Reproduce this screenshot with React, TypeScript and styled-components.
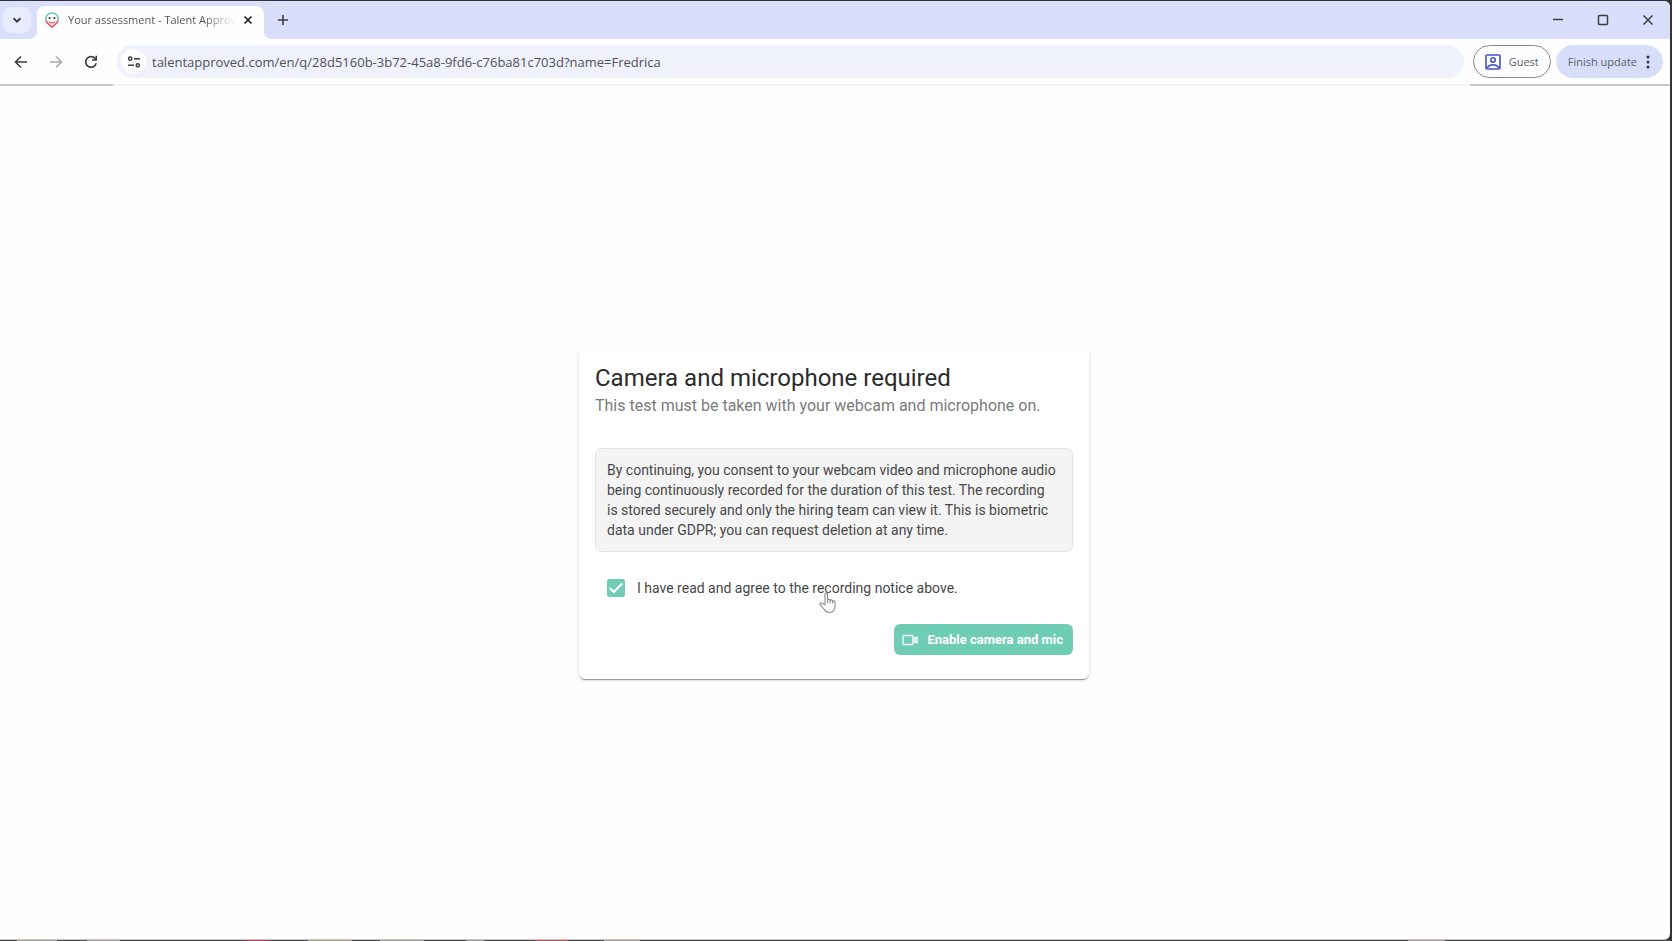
import React, { useState } from "react";
import styled, { createGlobalStyle } from "styled-components";

const GlobalStyle = createGlobalStyle`
  *, *::before, *::after { box-sizing: border-box; }
  body { margin: 0; background: #333437; font-family: Roboto, sans-serif; }
  button, input { font: inherit; }
`;

const uiFont = `"Open Sans", "Noto Sans", sans-serif`;

const Frame = styled.div`
  display: flex;
  flex-direction: column;
  min-height: 100vh;
  padding: 1px 2px 0 0;
`;

const BrowserWindow = styled.div`
  flex: 1;
  display: flex;
  flex-direction: column;
  overflow: hidden;
  border-radius: 0 6px 6px 0;
  border-bottom: 1px solid #c4c4c4;
  background: #fefefe;
`;

const DesktopEdge = styled.div`
  height: 1px;
  background: linear-gradient(
    to right,
    #4d4d4f 17px, #a9a5a3 17px 57px,
    #4d4d4f 57px 87px, #a09d9c 87px 120px,
    #4d4d4f 120px 245px, #a33a55 245px 270px,
    #4d4d4f 270px 308px, #a8a07c 308px 352px,
    #4d4d4f 352px 380px, #a3a19d 380px 424px,
    #4d4d4f 424px 466px, #9b9b9b 466px 484px,
    #4d4d4f 484px 535px, #b0564f 535px 568px,
    #4d4d4f 568px 604px, #a89f9f 604px 640px,
    #4d4d4f 640px 1408px, #aaa2a3 1408px 1445px,
    #4d4d4f 1445px
  );
`;

const TabStrip = styled.header`
  display: flex;
  align-items: center;
  height: 38px;
  padding-left: 3px;
  background: #d9defb;
`;

const IconButton = styled.button<{ $w?: number; $h?: number; $color?: string; $bg?: string }>`
  display: flex;
  align-items: center;
  justify-content: center;
  flex: none;
  width: ${(p) => p.$w ?? 28}px;
  height: ${(p) => p.$h ?? 28}px;
  padding: 0;
  border: 0;
  border-radius: 8px;
  color: ${(p) => p.$color ?? "#3b3d42"};
  background: ${(p) => p.$bg ?? "transparent"};
`;

const Tab = styled.div`
  position: relative;
  display: flex;
  align-items: center;
  align-self: flex-end;
  width: 227px;
  height: 33px;
  margin-left: 6px;
  padding: 0 4px 5px 8px;
  border-radius: 8px 8px 0 0;
  background: #fefefe;

  &::before,
  &::after {
    content: "";
    position: absolute;
    bottom: 0;
    width: 8px;
    height: 8px;
  }
  &::before {
    right: 100%;
    background: radial-gradient(circle at 0 0, transparent 8px, #fefefe 8px);
  }
  &::after {
    left: 100%;
    background: radial-gradient(circle at 100% 0, transparent 8px, #fefefe 8px);
  }
`;

const TabTitle = styled.span`
  flex: 1;
  margin-left: 9px;
  overflow: hidden;
  white-space: nowrap;
  font: 11px/16px ${uiFont};
  color: #55575c;
  mask-image: linear-gradient(to right, #000 calc(100% - 32px), transparent);
`;

const WindowControls = styled.div`
  display: flex;
  gap: 17px;
  margin-left: auto;
  padding-right: 8px;
`;

const Toolbar = styled.nav`
  display: flex;
  align-items: center;
  height: 45px;
  padding: 0 7px;
`;

const NavButtons = styled.div`
  display: flex;
  gap: 7px;
  margin-right: 12px;
`;

const AddressBar = styled.label`
  flex: 1;
  display: flex;
  align-items: center;
  height: 33px;
  padding-left: 4px;
  border-radius: 17px;
  background: #eff1fc;
`;

const SiteInfo = styled.span`
  display: flex;
  align-items: center;
  justify-content: center;
  width: 25px;
  height: 25px;
  margin-right: 6px;
  border-radius: 50%;
  background: #fefefe;
  color: #3b3d42;
`;

const UrlInput = styled.input`
  flex: 1;
  min-width: 0;
  padding: 0;
  border: 0;
  outline: 0;
  background: transparent;
  font: 13px/20px ${uiFont};
  color: #4f5156;
`;

const Pill = styled.button<{ $outlined?: boolean }>`
  display: flex;
  align-items: center;
  gap: 8px;
  height: 33px;
  margin-left: ${(p) => (p.$outlined ? 9 : 5)}px;
  padding: 0 11px;
  border: 1px solid ${(p) => (p.$outlined ? "#8b8883" : "#d7defa")};
  border-radius: 17px;
  background: ${(p) => (p.$outlined ? "#fefefe" : "#d7defa")};
  font: 11px/16px ${uiFont};
  color: #5b5e6b;
  white-space: nowrap;
`;

const ToolbarEdge = styled.div`
  display: flex;
  justify-content: space-between;
  height: 2px;
  background: #f3f3f4;

  &::before,
  &::after {
    content: "";
    background: #c9c9c9;
  }
  &::before { width: 113px; }
  &::after { width: 200px; }
`;

const Page = styled.main`
  flex: 1;
  display: flex;
  align-items: center;
  justify-content: center;
  padding-top: 12px;
`;

/* Hides the upper edge of the card while its shadow shows on the other sides. */
const CardClip = styled.div`
  max-width: 100%;
  padding: 0 6px 6px;
  margin-right: 2px;
  overflow: hidden;
`;

const Card = styled.section`
  width: 510px;
  max-width: 100%;
  padding: 12px 16px 24px;
  border-radius: 0 0 6px 6px;
  background: #fff;
  box-shadow: 0 2px 1px -1px #00000040, 0 1px 1px #00000030, 0 1px 4px #0000001c;
`;

const Title = styled.h1`
  margin: 0;
  font-size: 24px;
  line-height: 28px;
  font-weight: 400;
  color: #2b2b2b;
`;

const Subtitle = styled.p`
  margin: 0;
  font-size: 16px;
  line-height: 28px;
  color: #7b7b7b;
`;

const Notice = styled.p`
  margin: 28px 0 0;
  padding: 11px;
  border: 1px solid #e4e4e4;
  border-radius: 6px;
  background: #f4f4f4;
  font-size: 14px;
  line-height: 20px;
  color: #484848;
`;

const Consent = styled.label`
  position: relative;
  display: flex;
  align-items: center;
  gap: 12px;
  margin-top: 26px;
  padding-left: 12px;
  font-size: 14px;
  line-height: 20px;
  color: #484848;
  cursor: pointer;
`;

const CheckFrame = styled.span`
  display: grid;
  width: 18px;
  height: 18px;

  > * { grid-area: 1 / 1; }
  > svg { pointer-events: none; }
`;

const Checkbox = styled.input`
  appearance: none;
  width: 18px;
  height: 18px;
  margin: 0;
  border: 2px solid #6fcdb5;
  border-radius: 2px;

  &:checked { background: #6fcdb5; }
`;

const Pointer = styled.svg`
  position: absolute;
  left: 224px;
  top: 14px;
`;

const Actions = styled.div`
  display: flex;
  justify-content: flex-end;
  margin-top: 26px;
`;

const PrimaryButton = styled.button`
  display: flex;
  align-items: center;
  gap: 9px;
  height: 31px;
  padding: 0 10px 0 8px;
  border: 0;
  border-radius: 6px;
  background: #6fcdb5;
  color: #fff;
  font-size: 13px;
  line-height: 20px;
  font-weight: 700;
  white-space: nowrap;
`;

type StrokeProps = { size: number; d: string; width?: number };

const Stroke = ({ size, d, width = 1.6 }: StrokeProps) => (
  <svg width={size} height={size} viewBox={`0 0 ${size} ${size}`} fill="none" stroke="currentColor" strokeWidth={width} aria-hidden="true">
    <path d={d} />
  </svg>
);

const Favicon = () => (
  <svg width="14" height="16" viewBox="0 0 14 16" fill="none" aria-hidden="true">
    <path d="M1 8.400C.3 4 3 1 7 1s6.700 3 6 7.400" stroke="#67cdb4" strokeWidth="1.600" />
    <path d="M1 8.400C1.600 11 4 12.700 7 15c3-2.300 5.400-4 6-6.600" stroke="#e05a6e" strokeWidth="1.800" />
    <path d="M4 9.600c1.800 1.600 4.200 1.600 6 0" stroke="#e05a6e" strokeWidth="1.200" />
    <circle cx="4.600" cy="6" r="1.100" fill="#333" />
    <circle cx="9.400" cy="6" r="1.100" fill="#333" />
  </svg>
);

const ReloadIcon = () => (
  <svg width="14" height="14" viewBox="0 0 14 14" fill="none" aria-hidden="true">
    <path d="M12.200 8.300A5.300 5.300 0 1 1 11 3.400L12.400 5" stroke="currentColor" strokeWidth="1.600" />
    <path d="M13 .8v5H8V4.300h3.500V.8z" fill="currentColor" />
  </svg>
);

const TuneIcon = () => (
  <svg width="14" height="12" viewBox="0 0 14 12" fill="none" stroke="currentColor" strokeWidth="1.500" aria-hidden="true">
    <circle cx="3.200" cy="2.700" r="1.600" />
    <path d="M7 2.700h6M1 9.300h6" />
    <circle cx="10.800" cy="9.300" r="1.600" />
  </svg>
);

const GuestIcon = () => (
  <svg width="16" height="16" viewBox="0 0 16 16" fill="none" stroke="#4353c4" strokeWidth="1.600" aria-hidden="true">
    <rect x="1" y="1" width="14" height="14" rx="1" />
    <circle cx="8" cy="5.900" r="2.200" />
    <path d="M2 13.800c1.400-2 3.500-3 6-3s4.600 1 6 3" />
  </svg>
);

const DotsIcon = () => (
  <svg width="6" height="14" viewBox="0 0 6 14" fill="#2f3138" aria-hidden="true">
    <circle cx="3" cy="2" r="1.500" />
    <circle cx="3" cy="7" r="1.500" />
    <circle cx="3" cy="12" r="1.500" />
  </svg>
);

const CameraIcon = () => (
  <svg width="16" height="12" viewBox="0 0 16 12" fill="none" stroke="currentColor" strokeWidth="1.300" strokeLinejoin="round" aria-hidden="true">
    <rect x="1" y="1.500" width="10" height="9" rx="1" />
    <path d="M11 5l4-2v6l-4-2M13.200 4v4" />
  </svg>
);

export default function App() {
  const [agreed, setAgreed] = useState(true);

  return (
    <>
      <GlobalStyle />
      <Frame>
        <BrowserWindow>
          <TabStrip>
            <IconButton $h={26} $bg="#e8ecfd" aria-label="Search tabs">
              <Stroke size={10} width={2} d="M1.500 3.200 5 6.700l3.500-3.500" />
            </IconButton>
            <Tab>
              <Favicon />
              <TabTitle>Your assessment - Talent Approved</TabTitle>
              <IconButton $w={24} $h={24} $color="#222327" aria-label="Close tab">
                <Stroke size={10} width={1.700} d="M1.500 1.500l7 7M8.500 1.500l-7 7" />
              </IconButton>
            </Tab>
            <IconButton $w={38} aria-label="New tab">
              <Stroke size={12} d="M6 1v10M1 6h10" />
            </IconButton>
            <WindowControls>
              <IconButton aria-label="Minimize">
                <Stroke size={12} width={1.400} d="M1 5.500h10" />
              </IconButton>
              <IconButton aria-label="Maximize">
                <Stroke size={12} width={1.500} d="M2.500 1.500h7a1 1 0 0 1 1 1v7a1 1 0 0 1-1 1h-7a1 1 0 0 1-1-1v-7a1 1 0 0 1 1-1z" />
              </IconButton>
              <IconButton aria-label="Close">
                <Stroke size={12} width={1.500} d="M1.500 1.500l9 9M10.500 1.500l-9 9" />
              </IconButton>
            </WindowControls>
          </TabStrip>
          <Toolbar>
            <NavButtons>
              <IconButton aria-label="Back">
                <Stroke size={14} d="M13 7H2M7 1.500 1.500 7 7 12.500" />
              </IconButton>
              <IconButton $color="#a9abb0" aria-label="Forward">
                <Stroke size={14} d="M1 7h11M7 1.500 12.500 7 7 12.500" />
              </IconButton>
              <IconButton aria-label="Reload">
                <ReloadIcon />
              </IconButton>
            </NavButtons>
            <AddressBar>
              <SiteInfo>
                <TuneIcon />
              </SiteInfo>
              <UrlInput
                aria-label="Address"
                defaultValue="talentapproved.com/en/q/28d5160b-3b72-45a8-9fd6-c76ba81c703d?name=Fredrica"
              />
            </AddressBar>
            <Pill $outlined>
              <GuestIcon />
              Guest
            </Pill>
            <Pill>
              Finish update
              <DotsIcon />
            </Pill>
          </Toolbar>
          <ToolbarEdge />
          <Page>
            <CardClip>
              <Card>
                <Title>Camera and microphone required</Title>
                <Subtitle>This test must be taken with your webcam and microphone on.</Subtitle>
                <Notice>
                  By continuing, you consent to your webcam video and microphone audio being continuously recorded for
                  the duration of this test. The recording
                  <br />
                  is stored securely and only the hiring team can view it. This is biometric data under GDPR; you can
                  request deletion at any time.
                </Notice>
                <Consent>
                  <CheckFrame>
                    <Checkbox type="checkbox" checked={agreed} onChange={(e) => setAgreed(e.target.checked)} />
                    <svg width="18" height="18" viewBox="0 0 18 18" fill="none" stroke="#fff" strokeWidth="2" aria-hidden="true">
                      <path d="M2.500 8.800 6.800 13 15.300 4.500" />
                    </svg>
                  </CheckFrame>
                  I have read and agree to the recording notice above.
                  <Pointer width="18" height="22" viewBox="0 0 18 22" fill="#fff" stroke="#8c8c8c" strokeWidth="1.100" strokeLinejoin="round" aria-hidden="true">
                    <path d="M6 13V2.500C6 .7 8.500.7 8.500 2.500V8c.4-1 2.300-.9 2.600.4.600-.8 2.300-.6 2.500.7.700-.7 2.400-.3 2.400 1.200V14c0 4-2 6.500-5.500 6.500-2.700 0-4-1-5.200-3L1.200 12.700c-.8-1.400.8-2.500 2-1.500z" />
                    <path d="M8.500 8v3M11.100 8.400v3M13.600 9.100v2.500" />
                  </Pointer>
                </Consent>
                <Actions>
                  <PrimaryButton type="button">
                    <CameraIcon />
                    Enable camera and mic
                  </PrimaryButton>
                </Actions>
              </Card>
            </CardClip>
          </Page>
        </BrowserWindow>
        <DesktopEdge />
      </Frame>
    </>
  );
}
